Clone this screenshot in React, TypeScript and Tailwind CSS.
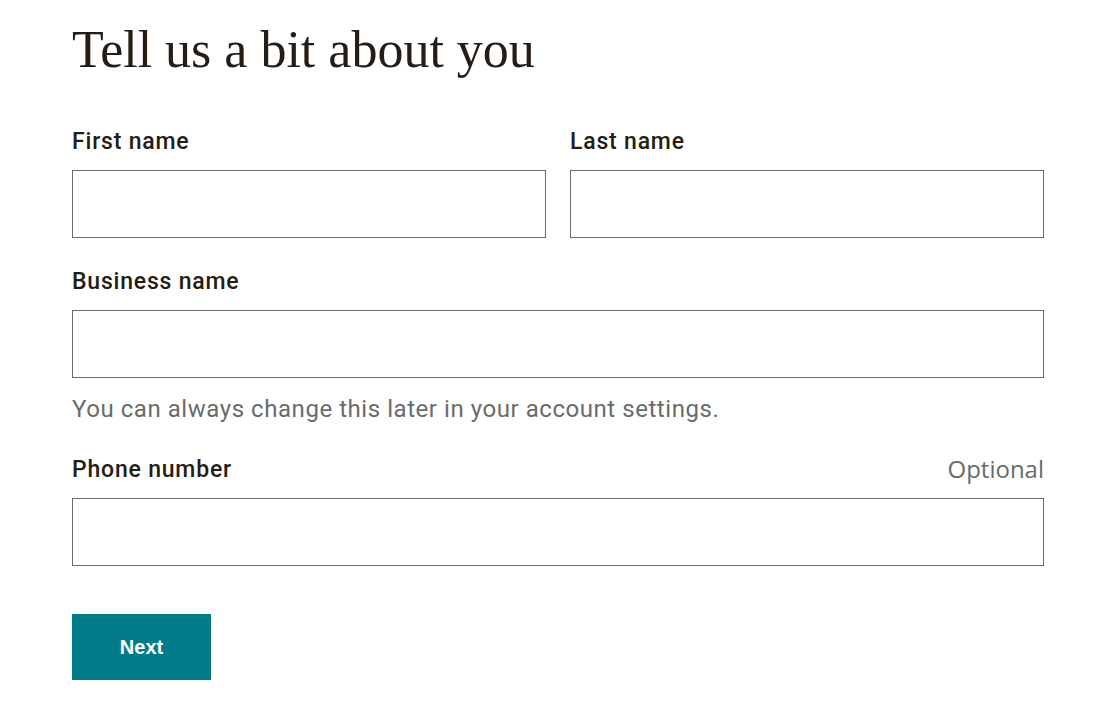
const labelCls =
  "block pt-[1px] font-['Roboto',sans-serif] text-[23px] font-medium leading-[28px] tracking-[0.8px] text-[#241c15]"

const inputCls = "block h-[68px] w-full border border-[#6e6a66] bg-white px-4 outline-none"

export default function App() {
  return (
    <div className="min-h-screen bg-white px-[72px]">
      <div className="w-[972px]">
        <h1 className="pt-[18px] font-['Liberation_Serif',serif] text-[52px] leading-[64px] text-[#241c15]">
          Tell us a bit about you
        </h1>

        <div className="mt-[45px] grid grid-cols-2 gap-x-[24px]">
          <div>
            <label className={`mb-[14px] ${labelCls}`}>First name</label>
            <input className={inputCls} />
          </div>
          <div>
            <label className={`mb-[14px] ${labelCls}`}>Last name</label>
            <input className={inputCls} />
          </div>
        </div>

        <div className="mt-[29px]">
          <label className={`mb-[14px] ${labelCls}`}>Business name</label>
          <input className={inputCls} />
          <p className="mt-[17px] font-['Roboto',sans-serif] text-[24px] leading-[28px] tracking-[0.55px] text-[#6b6b6b]">
            You can always change this later in your account settings.
          </p>
        </div>

        <div className="mt-[32px]">
          <div className="mb-[14px] flex items-start justify-between">
            <label className={labelCls}>Phone number</label>
            <span className="font-['Open_Sans',sans-serif] text-[24px] leading-[28px] text-[#6b6b6b]">
              Optional
            </span>
          </div>
          <input className={inputCls} />
        </div>

        <button className="mt-[48px] h-[66px] w-[139px] bg-[#007c89] font-['Liberation_Sans',sans-serif] text-[20px] font-bold text-white">
          Next
        </button>
      </div>
    </div>
  )
}
